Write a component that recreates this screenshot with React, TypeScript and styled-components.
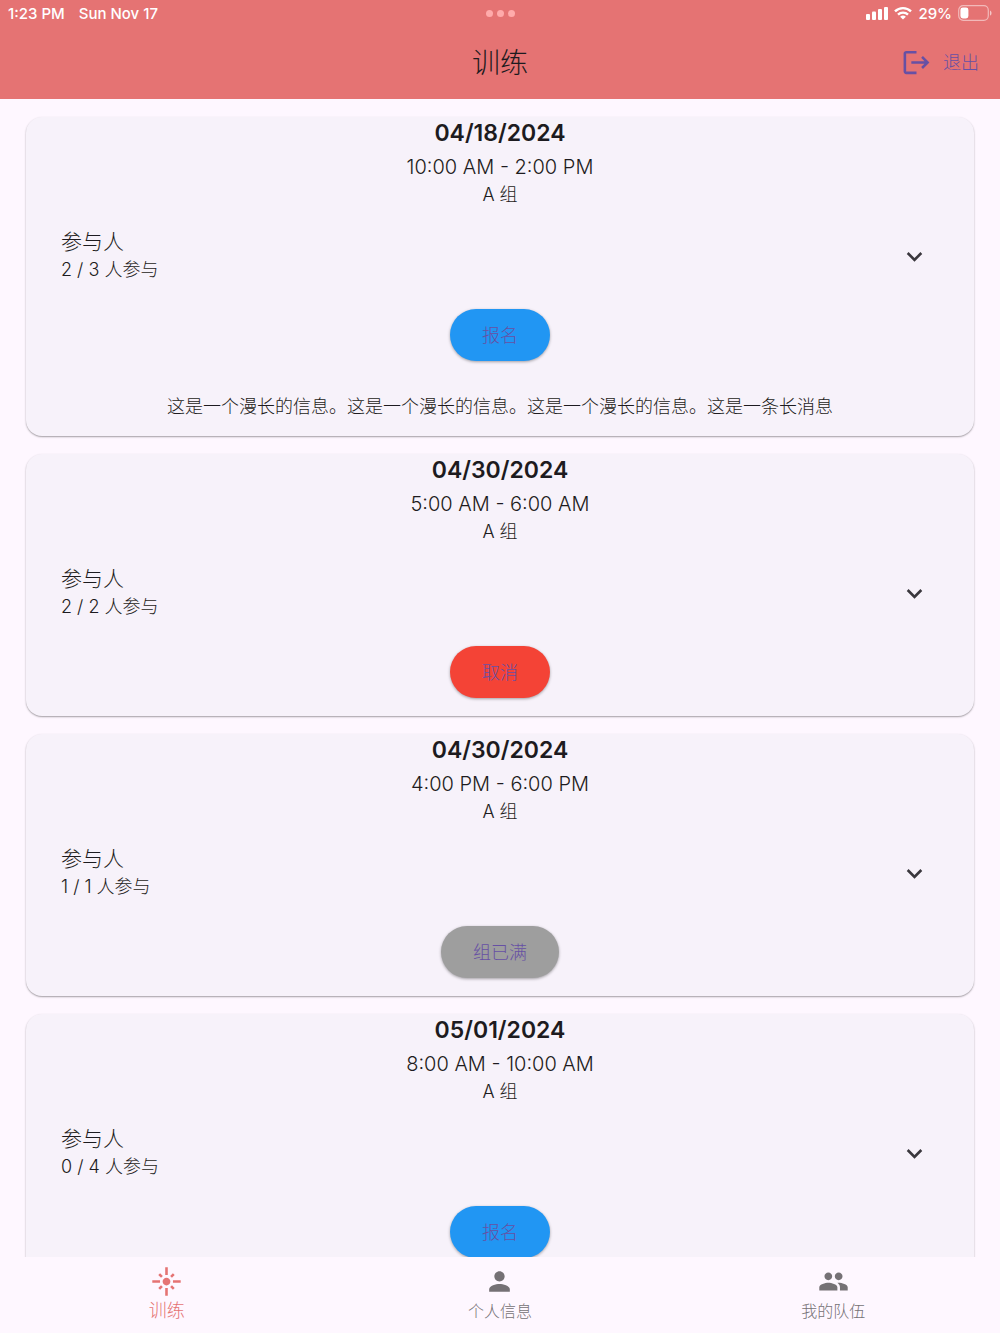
import React, { useState } from "react";
import styled, { createGlobalStyle } from "styled-components";

const GlobalStyle = createGlobalStyle`
  *, *::before, *::after { box-sizing: border-box; }
  body {
    margin: 0;
    background: #fef7ff;
    color: #1d1b20;
    font-family: Inter, "Noto Sans CJK SC", sans-serif;
    font-weight: 300;
  }
  button { font: inherit; color: inherit; border: 0; cursor: pointer; }
  h1, h2, h3, p { margin: 0; font-weight: inherit; }
`;

const Screen = styled.div`
  display: flex;
  flex-direction: column;
  height: 100vh;
`;

const Header = styled.header`
  flex: none;
  background: #e57373;
`;

const StatusBar = styled.div`
  display: grid;
  grid-template-columns: 1fr auto 1fr;
  align-items: center;
  height: 26px;
  padding: 0 8px;
  color: #fff;
  font-size: 15px;
  font-weight: 500;
`;

const StatusGroup = styled.div<{ $end?: boolean; $gap: number }>`
  display: flex;
  align-items: center;
  justify-content: ${(p) => (p.$end ? "flex-end" : "flex-start")};
  gap: ${(p) => p.$gap}px;
`;

const Dots = styled.div`
  display: flex;
  gap: 4px;
`;

const Dot = styled.span`
  width: 7px;
  height: 7px;
  border-radius: 50%;
  background: #ffabab;
`;

const AppBar = styled.div`
  display: grid;
  grid-template-columns: 1fr auto 1fr;
  align-items: center;
  height: 73px;
  padding: 0 21px;
`;

const Title = styled.h1`
  grid-column: 2;
  font-size: 28px;
  line-height: 36px;
`;

const LogoutButton = styled.button`
  justify-self: end;
  display: flex;
  align-items: center;
  gap: 11px;
  padding: 0;
  background: none;
  color: #6750a4;
  font-size: 18px;
  line-height: 24px;
`;

const List = styled.main`
  flex: 1;
  min-height: 0;
  overflow-y: auto;
  scrollbar-width: none;
  display: flex;
  flex-direction: column;
  gap: 18px;
  padding: 18px 26px;
`;

const Card = styled.article`
  flex: none;
  display: flex;
  flex-direction: column;
  align-items: center;
  padding-bottom: 18px;
  border-radius: 16px;
  background: #f7f2fa;
  box-shadow: 0 1px 2px rgba(0, 0, 0, 0.3), 0 1px 1px rgba(0, 0, 0, 0.08);
`;

const DateText = styled.h2`
  font-size: 23px;
  font-weight: 600;
  line-height: 32px;
`;

const TimeText = styled.p`
  font-size: 20px;
  line-height: 36px;
`;

const GroupText = styled.p`
  font-size: 18px;
  line-height: 20px;
`;

const Participants = styled.button`
  display: flex;
  align-items: center;
  justify-content: space-between;
  width: 100%;
  height: 104px;
  padding: 0 44px 2px 35px;
  background: none;
  text-align: left;
`;

const ParticipantsText = styled.span`
  display: flex;
  flex-direction: column;
  line-height: 28px;
`;

const Label = styled.span<{ $size: number }>`
  font-size: ${(p) => p.$size}px;
`;

const Chevron = styled.span`
  color: #3a373d;
`;

const ActionButton = styled.button<{ $color: string }>`
  height: 52px;
  padding: 0 32px 2px;
  border-radius: 26px;
  background: ${(p) => p.$color};
  color: #6750a4;
  font-size: 18px;
  box-shadow: 0 1px 3px rgba(0, 0, 0, 0.35);
`;

const Message = styled.p`
  margin-top: 35px;
  font-size: 18px;
  line-height: 22px;
  text-align: center;
`;

const NavBar = styled.nav`
  flex: none;
  display: grid;
  grid-template-columns: repeat(3, 1fr);
  height: 76px;
  background: #fef7ff;
`;

const NavItem = styled.a<{ $active?: boolean }>`
  display: flex;
  flex-direction: column;
  align-items: center;
  padding-top: 9px;
  color: ${(p) => (p.$active ? "#e57373" : "#757175")};
  font-size: ${(p) => (p.$active ? 18 : 16)}px;
  line-height: 28px;
  text-decoration: none;
`;

const Svg = styled.svg<{ $flip?: boolean }>`
  display: block;
  flex: none;
  transform: ${(p) => (p.$flip ? "rotate(180deg)" : "none")};
`;

const paths = {
  logout:
    "M17 7l-1.41 1.41L18.17 11H8v2h10.17l-2.58 2.58L17 17l5-5zM4 5h8V3H4c-1.1 0-2 .9-2 2v14c0 1.1.9 2 2 2h8v-2H4V5z",
  more: "M16.59 8.59L12 13.17 7.41 8.59 6 10l6 6 6-6z",
  flare:
    "M7 11H1v2h6v-2zm2.17-3.24L7.05 5.64 5.64 7.05l2.12 2.12 1.41-1.41zM13 1h-2v6h2V1zm5.36 6.05l-1.41-1.41-2.12 2.12 1.41 1.41 2.12-2.12zM17 11v2h6v-2h-6zm-5-2c-1.66 0-3 1.34-3 3s1.34 3 3 3 3-1.34 3-3-1.34-3-3-3zm2.83 7.24l2.12 2.12 1.41-1.41-2.12-2.12-1.41 1.41zm-9.19.71l1.41 1.41 2.12-2.12-1.41-1.41-2.12 2.12zM11 23h2v-6h-2v6z",
  person:
    "M12 12c2.21 0 4-1.79 4-4s-1.79-4-4-4-4 1.79-4 4 1.79 4 4 4zm0 2c-2.67 0-8 1.34-8 4v2h16v-2c0-2.66-5.33-4-8-4z",
  people:
    "M16 11c1.66 0 2.99-1.34 2.99-3S17.66 5 16 5s-3 1.34-3 3 1.34 3 3 3zm-8 0c1.66 0 2.99-1.34 2.99-3S9.66 5 8 5 5 6.34 5 8s1.34 3 3 3zm0 2c-2.33 0-7 1.17-7 3.5V19h14v-2.5c0-2.33-4.67-3.5-7-3.5zm8 0c-.29 0-.62.02-.97.05 1.16.84 1.97 1.97 1.97 3.45V19h6v-2.5c0-2.33-4.67-3.5-7-3.5z",
};

function Icon({ name, flip }: { name: keyof typeof paths; flip?: boolean }) {
  return (
    <Svg $flip={flip} width="31" height="31" viewBox="0 0 24 24" fill="currentColor" aria-hidden="true">
      <path d={paths[name]} />
    </Svg>
  );
}

function SignalIcon() {
  return (
    <Svg width="22" height="14" viewBox="0 0 22 14" fill="currentColor" aria-hidden="true">
      <rect x="0" y="8" width="4" height="6" rx="1" />
      <rect x="6" y="5.5" width="4" height="8.5" rx="1" />
      <rect x="12" y="3" width="4" height="11" rx="1" />
      <rect x="18" y="1" width="4" height="13" rx="1" />
    </Svg>
  );
}

function WifiIcon() {
  return (
    <Svg width="18" height="14" viewBox="0 0 18 14" aria-hidden="true">
      <g fill="none" stroke="currentColor" strokeWidth="2.4">
        <path d="M1 5.4a11.4 11.4 0 0 1 16 0" />
        <path d="M4 8.6a7.2 7.2 0 0 1 10 0" />
      </g>
      <path d="M9 13.6L6.1 10.8a4.2 4.2 0 0 1 5.8 0z" fill="currentColor" />
    </Svg>
  );
}

function BatteryIcon() {
  return (
    <Svg width="34" height="16" viewBox="0 0 34 16" aria-hidden="true">
      <rect x="0.7" y="0.7" width="29.6" height="14.6" rx="4.5" fill="none" stroke="#fff" strokeOpacity="0.5" strokeWidth="1.2" />
      <rect x="2.4" y="2.6" width="8" height="10.8" rx="2.4" fill="#fff" />
      <path d="M32 5.4c2 .8 2 4.4 0 5.2z" fill="#fff" fillOpacity="0.6" />
    </Svg>
  );
}

type Session = {
  date: string;
  time: string;
  count: string;
  action: string;
  color: string;
  message?: string;
};

const sessions: Session[] = [
  {
    date: "04/18/2024",
    time: "10:00 AM - 2:00 PM",
    count: "2 / 3 人参与",
    action: "报名",
    color: "#2196f3",
    message: "这是一个漫长的信息。这是一个漫长的信息。这是一个漫长的信息。这是一条长消息",
  },
  { date: "04/30/2024", time: "5:00 AM - 6:00 AM", count: "2 / 2 人参与", action: "取消", color: "#f44336" },
  { date: "04/30/2024", time: "4:00 PM - 6:00 PM", count: "1 / 1 人参与", action: "组已满", color: "#9e9e9e" },
  { date: "05/01/2024", time: "8:00 AM - 10:00 AM", count: "0 / 4 人参与", action: "报名", color: "#2196f3" },
];

function SessionCard({ session }: { session: Session }) {
  const [open, setOpen] = useState(false);
  return (
    <Card>
      <DateText>{session.date}</DateText>
      <TimeText>{session.time}</TimeText>
      <GroupText>A 组</GroupText>
      <Participants type="button" aria-expanded={open} onClick={() => setOpen(!open)}>
        <ParticipantsText>
          <Label $size={21}>参与人</Label>
          <Label $size={18}>{session.count}</Label>
        </ParticipantsText>
        <Chevron>
          <Icon name="more" flip={open} />
        </Chevron>
      </Participants>
      <ActionButton type="button" $color={session.color}>
        {session.action}
      </ActionButton>
      {session.message && <Message>{session.message}</Message>}
    </Card>
  );
}

export default function App() {
  return (
    <Screen>
      <GlobalStyle />
      <Header>
        <StatusBar>
          <StatusGroup $gap={14}>
            <span>1:23 PM</span>
            <span>Sun Nov 17</span>
          </StatusGroup>
          <Dots>
            <Dot />
            <Dot />
            <Dot />
          </Dots>
          <StatusGroup $gap={6} $end>
            <SignalIcon />
            <WifiIcon />
            <span>29%</span>
            <BatteryIcon />
          </StatusGroup>
        </StatusBar>
        <AppBar>
          <Title>训练</Title>
          <LogoutButton type="button">
            <Icon name="logout" />
            退出
          </LogoutButton>
        </AppBar>
      </Header>
      <List>
        {sessions.map((session) => (
          <SessionCard key={session.date + session.time} session={session} />
        ))}
      </List>
      <NavBar>
        <NavItem href="#training" $active aria-current="page">
          <Icon name="flare" />
          训练
        </NavItem>
        <NavItem href="#profile">
          <Icon name="person" />
          个人信息
        </NavItem>
        <NavItem href="#team">
          <Icon name="people" />
          我的队伍
        </NavItem>
      </NavBar>
    </Screen>
  );
}
